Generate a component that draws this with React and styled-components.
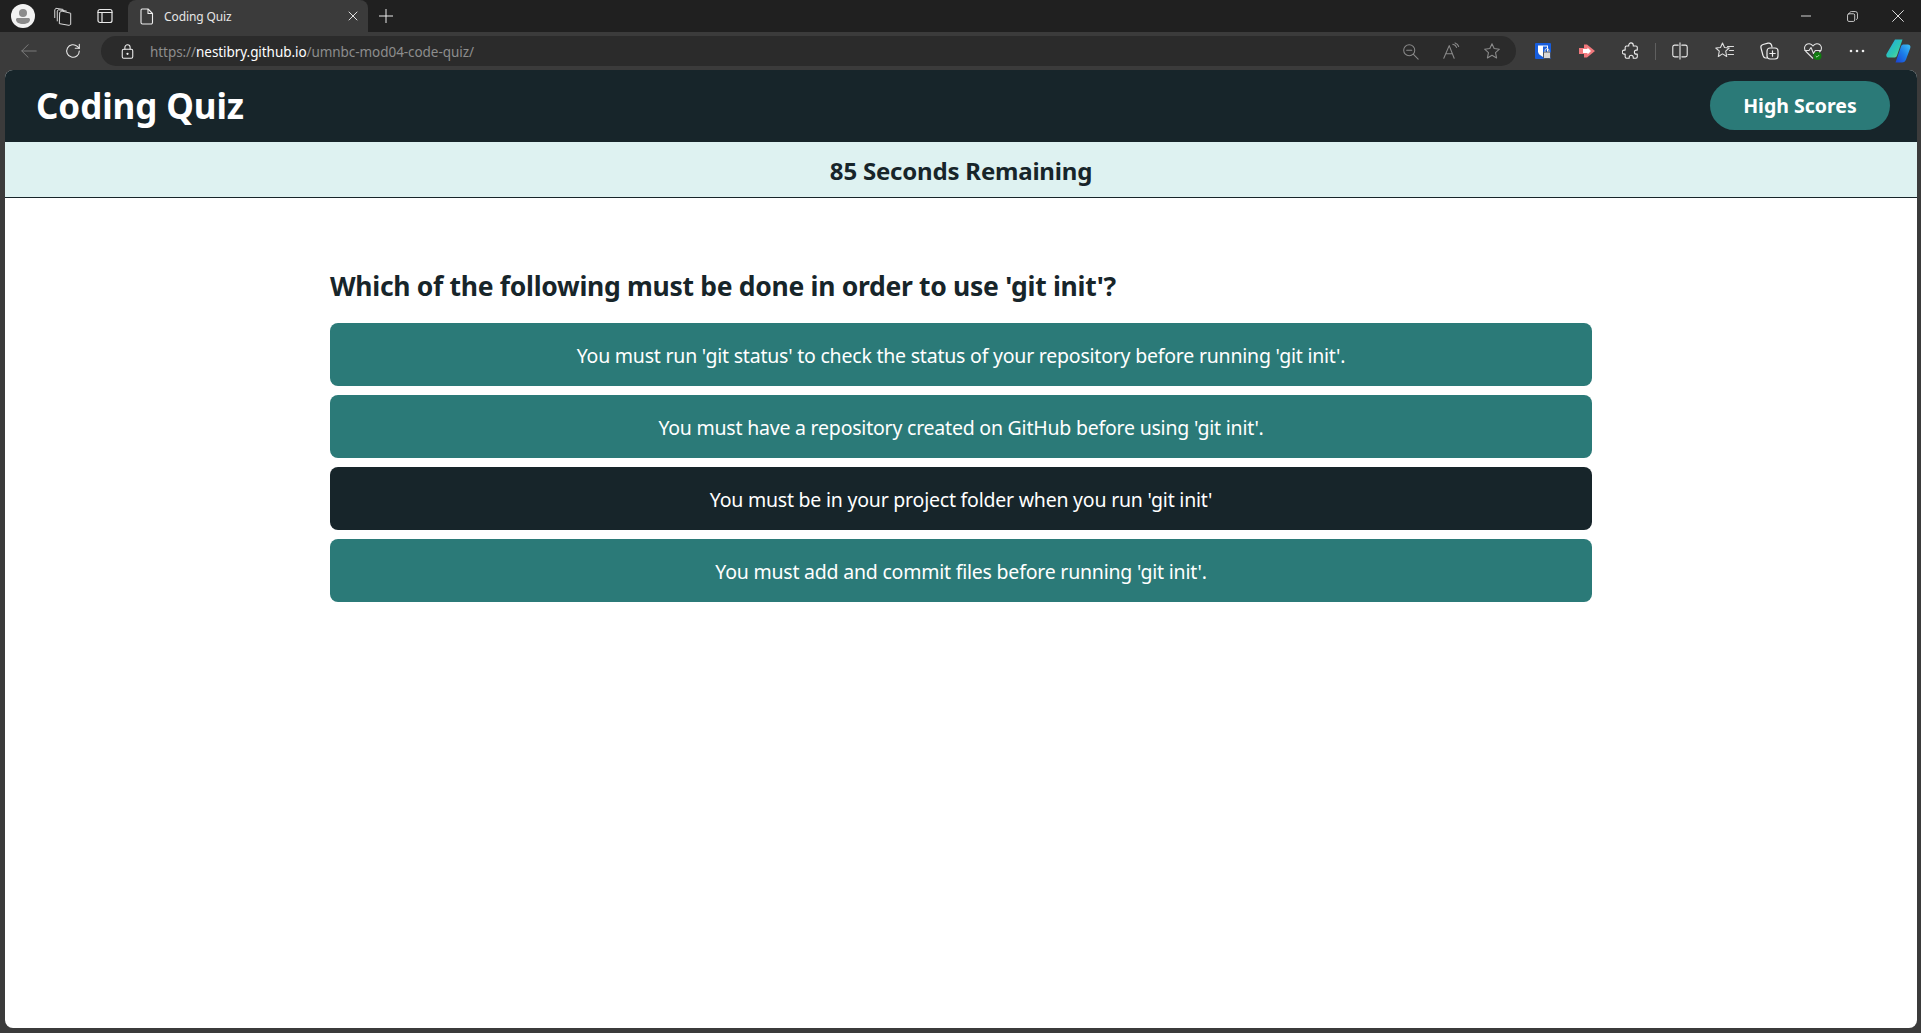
import React from 'react';
import styled, { createGlobalStyle } from 'styled-components';

const GlobalStyle = createGlobalStyle`
  html, body, #root {
    margin: 0;
    height: 100%;
  }
  body {
    background: #3b3b3b;
    font-family: "Noto Sans", "Open Sans", "Liberation Sans", sans-serif;
    overflow: hidden;
  }
`;

const Browser = styled.div`
  display: flex;
  flex-direction: column;
  height: 1033px;
  background: #3b3b3b;
`;

const TabStrip = styled.div`
  display: flex;
  align-items: center;
  height: 32px;
  background: #202020;
  flex: none;
`;

const StripIcon = styled.div`
  display: flex;
  align-items: center;
  justify-content: center;
  flex: none;
  width: ${(p) => p.$w || 42}px;
  height: 32px;
  margin-left: ${(p) => p.$ml || 0}px;
`;

const Tab = styled.div`
  display: flex;
  align-items: center;
  flex: none;
  width: 240px;
  height: 32px;
  margin-left: 2px;
  background: #3b3b3b;
  border-radius: 8px 8px 0 0;
  color: #e6e6e6;
  font-size: 12px;
  letter-spacing: -0.1px;
`;

const TabIcon = styled.div`
  display: flex;
  width: 14px;
  margin: 0 10px 0 12px;
`;

const TabTitle = styled.span`
  flex: 1;
`;

const TabClose = styled.div`
  display: flex;
  margin-right: 10px;
`;

const StripSpacer = styled.div`
  flex: 1;
`;

const Toolbar = styled.div`
  display: flex;
  align-items: center;
  height: 38px;
  flex: none;
  background: #3b3b3b;
`;

const AddressBar = styled.div`
  display: flex;
  align-items: center;
  flex: none;
  width: 1415px;
  height: 30px;
  margin-left: 6px;
  background: #2b2b2b;
  border-radius: 15px;
`;

const LockSlot = styled.div`
  display: flex;
  margin: 0 15px 0 19px;
`;

const Url = styled.div`
  flex: 1;
  padding-top: 1px;
  font-size: 13.5px;
  letter-spacing: -0.06px;
  color: #8d8d8d;
  white-space: nowrap;
`;

const Host = styled.span`
  color: #ffffff;
`;

const AddressActions = styled.div`
  display: flex;
  align-items: center;
  gap: 13px;
  margin-right: 10px;
`;

const ToolSlot = styled.div`
  display: flex;
  align-items: center;
  justify-content: center;
  flex: none;
  width: ${(p) => p.$w || 44}px;
  height: 30px;
  margin-left: ${(p) => p.$ml || 0}px;
`;

const Divider = styled.div`
  width: 1px;
  height: 17px;
  flex: none;
  margin-left: 2px;
  background: #5f5f5f;
`;

const Page = styled.main`
  flex: 1;
  display: flex;
  flex-direction: column;
  margin: 0 4px 5px 5px;
  background: #ffffff;
  border-radius: 8px;
  overflow: hidden;
`;

const Header = styled.header`
  display: flex;
  align-items: center;
  justify-content: space-between;
  height: 72px;
  flex: none;
  padding: 0 27px 0 31px;
  background: #17252a;
`;

const Title = styled.h1`
  margin: 0 0 2px;
  color: #ffffff;
  font-size: 35px;
  font-weight: 700;
  letter-spacing: -0.1px;
`;

const ScoresButton = styled.button`
  width: 180px;
  height: 49px;
  margin-bottom: 1px;
  border: none;
  border-radius: 25px;
  background: #2b7a78;
  color: #ffffff;
  font-family: inherit;
  font-size: 19.5px;
  font-weight: 700;
`;

const TimerBar = styled.div`
  display: flex;
  align-items: center;
  justify-content: center;
  height: 54px;
  padding-top: 1px;
  flex: none;
  background: #def2f1;
  border-bottom: 1px solid #17252a;
  color: #17252a;
  font-size: 24px;
  font-weight: 700;
  letter-spacing: -0.2px;
`;

const Quiz = styled.section`
  display: flex;
  flex-direction: column;
  width: 66%;
  margin: 0 auto;
  padding-top: 69px;
`;

const Question = styled.h2`
  margin: 0 0 18px;
  color: #17252a;
  font-size: 26.5px;
  line-height: 38px;
  font-weight: 700;
  letter-spacing: -0.3px;
`;

const Answers = styled.div`
  display: flex;
  flex-direction: column;
  gap: 9px;
`;

const Answer = styled.button`
  height: 63px;
  padding-top: 3px;
  border: none;
  border-radius: 8px;
  background: ${(p) => (p.$active ? '#17252a' : '#2b7a78')};
  color: #ffffff;
  font-family: inherit;
  font-size: 19.5px;
  letter-spacing: -0.215px;
`;

const Line = ({ size = 20, color = '#e8e8e8', sw = 1.2, children }) => (
  <svg width={size} height={size} viewBox="0 0 20 20" fill="none" stroke={color} strokeWidth={sw} strokeLinecap="round" strokeLinejoin="round">
    {children}
  </svg>
);

const answers = [
  "You must run 'git status' to check the status of your repository before running 'git init'.",
  "You must have a repository created on GitHub before using 'git init'.",
  "You must be in your project folder when you run 'git init'",
  "You must add and commit files before running 'git init'.",
];

const App = () => (
  <>
    <GlobalStyle />
    <Browser>
      <TabStrip>
        <StripIcon $w={24} $ml={11}>
          <svg width="24" height="24" viewBox="0 0 24 24">
            <circle cx="12" cy="12" r="12" fill="#f2f2f2" />
            <circle cx="12" cy="9" r="4" fill="#8a8a8a" />
            <path d="M5 15.5c0-1 .8-1.5 1.8-1.5h10.4c1 0 1.8.5 1.8 1.5 0 3-3.2 4.5-7 4.5s-7-1.5-7-4.5z" fill="#8a8a8a" />
          </svg>
        </StripIcon>
        <StripIcon $w={42} $ml={7}>
          <Line size={22} color="#dcdcdc" sw={0.9}>
            <path d="M7 17l8.500 1.500 1.500-.8V7.500L9 5.500 7.300 6.500z" />
            <path d="M4.800 14.500V5.500l1-1.200 7.200 1.200" />
            <path d="M2.500 11.500V4.500l1-1.500 6.500 1" />
          </Line>
        </StripIcon>
        <StripIcon $w={42}>
          <Line size={20} color="#e8e8e8" sw={1.2}>
            <rect x="3" y="3.500" width="14" height="13" rx="2" />
            <path d="M3 6.500h14M7 6.500v10" />
          </Line>
        </StripIcon>
        <Tab>
          <TabIcon>
            <svg width="14" height="17" viewBox="0 0 14 17" fill="none" stroke="#eeeeee" strokeWidth="1.1" strokeLinejoin="round">
              <path d="M2 1h6l4.500 4.500V14.500a1.500 1.500 0 0 1-1.500 1.500H2.500A1.500 1.500 0 0 1 1 14.500V2.500A1.500 1.500 0 0 1 2 1z" />
              <path d="M8 1v4.500h4.500" />
            </svg>
          </TabIcon>
          <TabTitle>Coding Quiz</TabTitle>
          <TabClose>
            <Line size={10} color="#e0e0e0" sw={2}>
              <path d="M2 2l16 16M18 2L2 18" />
            </Line>
          </TabClose>
        </Tab>
        <StripIcon $w={36}>
          <Line size={14} color="#f0f0f0" sw={1.4}>
            <path d="M10 0v20M0 10h20" />
          </Line>
        </StripIcon>
        <StripSpacer />
        <StripIcon $w={46}>
          <Line size={10} color="#e8e8e8" sw={1.8}>
            <path d="M0 10h20" />
          </Line>
        </StripIcon>
        <StripIcon $w={46}>
          <Line size={11} color="#e8e8e8" sw={1.5}>
            <rect x="1" y="5" width="13" height="14" rx="2.500" />
            <path d="M5 2.500Q5.500 1 8 1h7q4 0 4 4v8q0 2-1.500 2.500" />
          </Line>
        </StripIcon>
        <StripIcon $w={46}>
          <Line size={12} color="#f0f0f0" sw={1.5}>
            <path d="M1 1l18 18M19 1L1 19" />
          </Line>
        </StripIcon>
      </TabStrip>

      <Toolbar>
        <ToolSlot $w={44} $ml={7}>
          <Line size={18} color="#7c7c7c" sw={1.1}>
            <path d="M18 10H2M9 3l-7 7 7 7" />
          </Line>
        </ToolSlot>
        <ToolSlot $w={44}>
          <Line size={18} color="#e8e8e8" sw={1.2}>
            <path d="M17 10a7 7 0 1 1-2.200-5.100L17 7" />
            <path d="M17 2.500V7h-4.500" />
          </Line>
        </ToolSlot>
        <AddressBar>
          <LockSlot>
            <Line size={15} color="#f0f0f0" sw={1.4}>
              <rect x="3" y="7" width="14" height="12" rx="2" />
              <path d="M6.500 7V4.500a3.500 3.500 0 0 1 7 0V7" />
              <circle cx="10" cy="13" r="0.8" fill="#f0f0f0" />
            </Line>
          </LockSlot>
          <Url>
            https://<Host>nestibry.github.io</Host>/umnbc-mod04-code-quiz/
          </Url>
          <AddressActions>
            <ToolSlot $w={28}>
              <Line size={17} color="#8a8a8a" sw={1.2}>
                <circle cx="8.500" cy="8.500" r="6.500" />
                <path d="M13.500 13.500L19 19M5.500 8.500h6" />
              </Line>
            </ToolSlot>
            <ToolSlot $w={28}>
              <Line size={18} color="#8a8a8a" sw={1.2}>
                <path d="M2 18L8 4l5.500 14M4 13h7.500" />
                <path d="M12 2.500c2 .3 3.500 1.500 4.200 3.500M14.500 1c2 .6 3.500 2 4 4" />
              </Line>
            </ToolSlot>
            <ToolSlot $w={28}>
              <Line size={18} color="#8a8a8a" sw={1.2}>
                <path d="M10 2l2.400 5.300 5.800.7-4.300 3.900 1.200 5.800L10 14.800l-5.100 2.900 1.200-5.800L1.800 8l5.800-.7z" />
              </Line>
            </ToolSlot>
          </AddressActions>
        </AddressBar>
        <ToolSlot $w={44} $ml={5}>
          <svg width="16" height="16" viewBox="0 0 16 16">
            <rect width="16" height="16" rx="1" fill="#175ddc" />
            <path d="M3 2.500h10v6c0 2.500-2.500 4-5 5.500-2.500-1.500-5-3-5-5.500z" fill="#ffffff" />
            <path d="M8 3.500h4v5c0 1.500-2 3-4 4z" fill="#175ddc" />
            <rect x="8.500" y="9" width="7" height="6.500" rx="1" fill="#d8d8d8" stroke="#3b3b3b" strokeWidth="0.8" />
            <path d="M10 9V7.500a2 2 0 0 1 4 0V9" fill="none" stroke="#d8d8d8" strokeWidth="1" />
          </svg>
        </ToolSlot>
        <ToolSlot $w={44}>
          <svg width="16" height="14" viewBox="0 0 16 14">
            <path d="M0 4h5V0.500h3L16 7l-8 6.500h-3V10H0z" fill="#f0787c" />
            <path d="M4 5h4.500V3.500L12 7 8.500 10.500V9H4z" fill="#ffffff" />
          </svg>
        </ToolSlot>
        <ToolSlot $w={44}>
          <Line size={18} color="#eeeeee" sw={1.2}>
            <path d="M7.500 4.500V3.500a2.500 2.500 0 0 1 5 0v1h3a1.500 1.500 0 0 1 1.500 1.500v3h-1a2.200 2.200 0 0 0 0 4.500h1v3a1.500 1.500 0 0 1-1.500 1.500h-3v-1a2.200 2.200 0 0 0-4.500 0v1h-3A1.500 1.500 0 0 1 3.500 16.500v-3h-1a2.200 2.200 0 0 1 0-4.500h1V6a1.500 1.500 0 0 1 1.500-1.500z" />
          </Line>
        </ToolSlot>
        <Divider />
        <ToolSlot $w={47}>
          <Line size={18} color="#eeeeee" sw={1.2}>
            <path d="M8 3.500H4a2 2 0 0 0-2 2v9a2 2 0 0 0 2 2h4M12 3.500h4a2 2 0 0 1 2 2v9a2 2 0 0 1-2 2h-4M10 1v18" />
          </Line>
        </ToolSlot>
        <ToolSlot $w={44}>
          <Line size={20} color="#dddddd" sw={1.1}>
            <path d="M7.500 2l2 4.500 4.700.5-3.500 3.200 1 5.300-4.200-2.600-4.200 2.600 1-5.300L.8 7l4.700-.5z" />
            <path d="M12.500 5.500h6M14.500 9.500h4M13 13.500h5.500" />
          </Line>
        </ToolSlot>
        <ToolSlot $w={44}>
          <Line size={20} color="#eeeeee" sw={1.2}>
            <path d="M8 17H6.500C5 17 4.500 16 4 14.500L2 7c-.4-1.500.3-3 2-3.500L9 2.200c1.500-.4 3 .3 3.500 1.800l.5 2" />
            <rect x="8" y="7" width="11" height="11" rx="3" />
            <path d="M13.500 9.800v5.400M10.800 12.500h5.400" />
          </Line>
        </ToolSlot>
        <ToolSlot $w={44}>
          <svg width="20" height="20" viewBox="0 0 20 20" fill="none">
            <path d="M10 17.500L3 10.500C1 8.500 1 5.500 3 3.800c2-1.600 5-1.300 7 1 2-2.300 5-2.600 7-1 2 1.700 2 4.700 0 6.700l-1 1" stroke="#e0e0e0" strokeWidth="1.1" />
            <path d="M1.500 9.500h4.500l2-3 2.500 6 1.800-3h6" stroke="#e0e0e0" strokeWidth="1.1" strokeLinejoin="round" />
            <circle cx="14.500" cy="15" r="4" fill="#107c10" />
            <path d="M12.800 15l1.200 1.200 2.200-2.200" stroke="#cfe8cf" strokeWidth="0.8" />
          </svg>
        </ToolSlot>
        <ToolSlot $w={44}>
          <svg width="16" height="4" viewBox="0 0 16 4">
            <circle cx="2" cy="2" r="1.300" fill="#eeeeee" />
            <circle cx="8" cy="2" r="1.300" fill="#eeeeee" />
            <circle cx="14" cy="2" r="1.300" fill="#eeeeee" />
          </svg>
        </ToolSlot>
        <ToolSlot $w={38}>
          <svg width="25" height="24" viewBox="0 0 25 24">
            <defs>
              <linearGradient id="copA" x1="0" y1="0" x2="1" y2="1">
                <stop offset="0" stopColor="#1fa7e8" />
                <stop offset="0.6" stopColor="#2fc8b0" />
                <stop offset="1" stopColor="#7ad88c" />
              </linearGradient>
              <linearGradient id="copB" x1="1" y1="0" x2="0" y2="1">
                <stop offset="0" stopColor="#3fc3f5" />
                <stop offset="0.5" stopColor="#1b7ce8" />
                <stop offset="1" stopColor="#1b3fd0" />
              </linearGradient>
            </defs>
            <path d="M9 0.500h7.500L11 16.500c-.5 1.500-1.500 2-3 2H3C.8 18.500-.2 17 .5 15z" fill="url(#copA)" />
            <path d="M16 23.500H9.500L15 7.500c.5-1.500 1.500-2 3-2h3.500c2.300 0 3.400 1.500 2.800 3.500L20 20.500c-.7 2-2 3-4 3z" fill="url(#copB)" />
          </svg>
        </ToolSlot>
      </Toolbar>

      <Page>
        <Header>
          <Title>Coding Quiz</Title>
          <ScoresButton>High Scores</ScoresButton>
        </Header>
        <TimerBar>85 Seconds Remaining</TimerBar>
        <Quiz>
          <Question>Which of the following must be done in order to use 'git init'?</Question>
          <Answers>
            {answers.map((text, i) => (
              <Answer key={text} $active={i === 2}>{text}</Answer>
            ))}
          </Answers>
        </Quiz>
      </Page>
    </Browser>
  </>
);

export default App;
